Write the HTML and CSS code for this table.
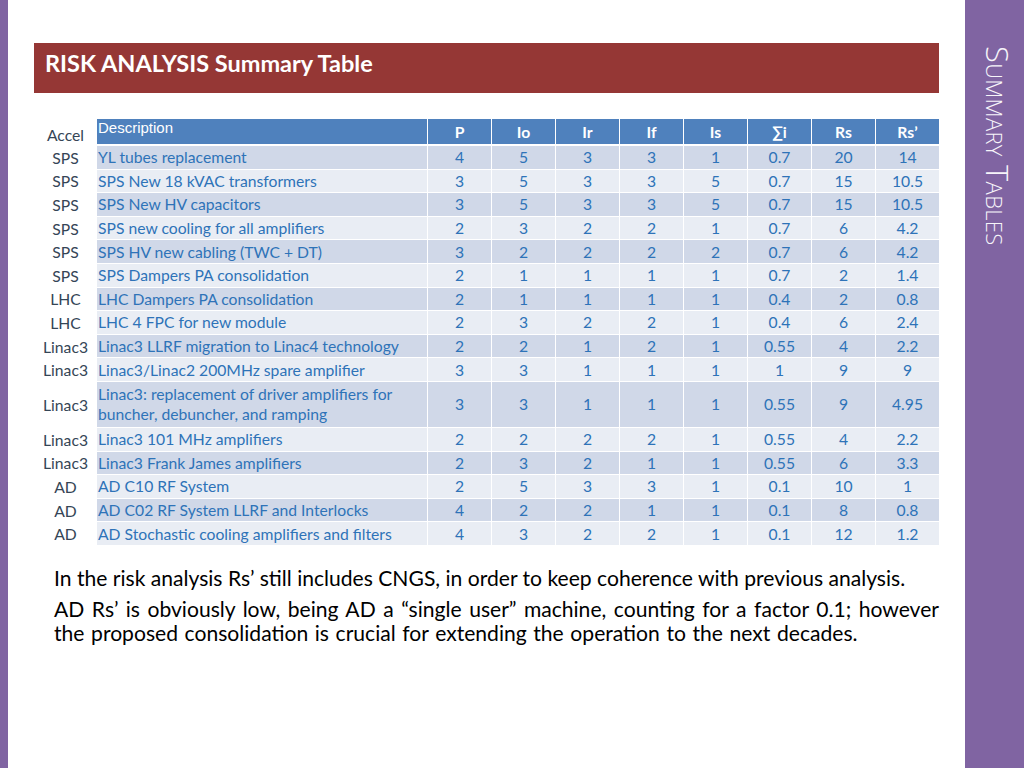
FILE: index.html
```html
<!DOCTYPE html>
<html>
<head>
<meta charset="utf-8">
<link rel="stylesheet" href="styles.css">
</head>
<body>
<div class="slide">
  <div class="left-bar"></div>
  <main class="content">
    <h1 class="title">RISK ANALYSIS Summary Table</h1>
    <table class="risk">
      <thead>
        <tr>
          <th class="accel">Accel</th>
          <th class="desc">Description</th>
          <th>P</th><th>Io</th><th>Ir</th><th>If</th><th>Is</th><th>∑i</th><th>Rs</th><th>Rs’</th>
        </tr>
      </thead>
      <tbody>
        <tr><td class="accel">SPS</td><td class="desc">YL tubes replacement</td><td>4</td><td>5</td><td>3</td><td>3</td><td>1</td><td>0.7</td><td>20</td><td>14</td></tr>
        <tr><td class="accel">SPS</td><td class="desc">SPS New 18 kVAC transformers</td><td>3</td><td>5</td><td>3</td><td>3</td><td>5</td><td>0.7</td><td>15</td><td>10.5</td></tr>
        <tr><td class="accel">SPS</td><td class="desc">SPS New HV capacitors</td><td>3</td><td>5</td><td>3</td><td>3</td><td>5</td><td>0.7</td><td>15</td><td>10.5</td></tr>
        <tr><td class="accel">SPS</td><td class="desc">SPS new cooling for all amplifiers</td><td>2</td><td>3</td><td>2</td><td>2</td><td>1</td><td>0.7</td><td>6</td><td>4.2</td></tr>
        <tr><td class="accel">SPS</td><td class="desc">SPS HV new cabling (TWC + DT)</td><td>3</td><td>2</td><td>2</td><td>2</td><td>2</td><td>0.7</td><td>6</td><td>4.2</td></tr>
        <tr><td class="accel">SPS</td><td class="desc">SPS Dampers PA consolidation</td><td>2</td><td>1</td><td>1</td><td>1</td><td>1</td><td>0.7</td><td>2</td><td>1.4</td></tr>
        <tr><td class="accel">LHC</td><td class="desc">LHC Dampers PA consolidation</td><td>2</td><td>1</td><td>1</td><td>1</td><td>1</td><td>0.4</td><td>2</td><td>0.8</td></tr>
        <tr><td class="accel">LHC</td><td class="desc">LHC 4 FPC for new module</td><td>2</td><td>3</td><td>2</td><td>2</td><td>1</td><td>0.4</td><td>6</td><td>2.4</td></tr>
        <tr><td class="accel">Linac3</td><td class="desc">Linac3 LLRF migration to Linac4 technology</td><td>2</td><td>2</td><td>1</td><td>2</td><td>1</td><td>0.55</td><td>4</td><td>2.2</td></tr>
        <tr><td class="accel">Linac3</td><td class="desc">Linac3/Linac2 200MHz spare amplifier</td><td>3</td><td>3</td><td>1</td><td>1</td><td>1</td><td>1</td><td>9</td><td>9</td></tr>
        <tr class="tall"><td class="accel">Linac3</td><td class="desc">Linac3: replacement of driver amplifiers for buncher, debuncher, and ramping</td><td>3</td><td>3</td><td>1</td><td>1</td><td>1</td><td>0.55</td><td>9</td><td>4.95</td></tr>
        <tr><td class="accel">Linac3</td><td class="desc">Linac3 101 MHz amplifiers</td><td>2</td><td>2</td><td>2</td><td>2</td><td>1</td><td>0.55</td><td>4</td><td>2.2</td></tr>
        <tr><td class="accel">Linac3</td><td class="desc">Linac3 Frank James amplifiers</td><td>2</td><td>3</td><td>2</td><td>1</td><td>1</td><td>0.55</td><td>6</td><td>3.3</td></tr>
        <tr><td class="accel">AD</td><td class="desc">AD C10 RF System</td><td>2</td><td>5</td><td>3</td><td>3</td><td>1</td><td>0.1</td><td>10</td><td>1</td></tr>
        <tr><td class="accel">AD</td><td class="desc">AD C02 RF System LLRF and Interlocks</td><td>4</td><td>2</td><td>2</td><td>1</td><td>1</td><td>0.1</td><td>8</td><td>0.8</td></tr>
        <tr><td class="accel">AD</td><td class="desc">AD Stochastic cooling amplifiers and filters</td><td>4</td><td>3</td><td>2</td><td>2</td><td>1</td><td>0.1</td><td>12</td><td>1.2</td></tr>
      </tbody>
    </table>
    <div class="notes">
      <p>In the risk analysis Rs’ still includes CNGS, in order to keep coherence with previous analysis.</p>
      <p class="just">AD Rs’ is obviously low, being AD a “single user” machine, counting for a factor 0.1; however the proposed consolidation is crucial for extending the operation to the next decades.</p>
    </div>
  </main>
  <aside class="side-bar"><span class="side-title">Summary Tables</span></aside>
</div>
</body>
</html>
```

FILE: styles.css
```css
html, body {
  margin: 0;
  padding: 0;
  background: #ffffff;
}
.slide {
  width: 1024px;
  height: 768px;
  display: flex;
  font-family: Lato, "Open Sans", sans-serif;
}
.left-bar {
  width: 8px;
  background: #8064a2;
  flex: none;
}
.content {
  flex: 1;
  padding: 43px 26px 0 26px;
}
.side-bar {
  width: 60px;
  flex: none;
  background: #8064a2;
  display: flex;
  justify-content: center;
  padding-top: 46px;
  padding-left: 5px;
  box-sizing: border-box;
}
.side-title {
  writing-mode: vertical-rl;
  font-variant: small-caps;
  font-size: 31px;
  color: #f7f5fa;
  letter-spacing: 0.3px;
  font-family: "Open Sans", Lato, sans-serif;
  font-weight: 300;
  height: max-content;
}
.title {
  margin: 0;
  height: 50px;
  background: #953735;
  color: #ffffff;
  font-size: 23.5px;
  font-weight: 700;
  line-height: 41px;
  padding-left: 11px;
  box-sizing: border-box;
}
.risk {
  margin-top: 26px;
  width: 904px;
  border-collapse: separate;
  border-spacing: 0;
  table-layout: fixed;
  font-size: 15.7px;
  color: #2e73b8;
}
.risk th, .risk td {
  padding: 0;
  text-align: center;
  border-right: 1px solid #ffffff;
  border-bottom: 1px solid #ffffff;
  height: 22.6px;
  width: 63px;
}
.risk th {
  background: #4f81bd;
  color: #ffffff;
  font-weight: 700;
  height: 23px;
  border-bottom-width: 2px;
}
.risk th.desc {
  text-align: left;
  vertical-align: top;
  font-family: "Liberation Sans", Arial, sans-serif;
  font-weight: 400;
  font-size: 15px;
  padding-left: 1px;
  line-height: 18px;
}
.risk .accel {
  width: 63px;
  background: transparent;
  color: #354556;
  font-weight: 400;
  border: none;
  vertical-align: middle;
}
.risk th.accel {
  padding-top: 4px;
}
.risk .desc {
  width: 329px;
  text-align: left;
  padding-left: 1px;
}
.risk tbody tr:nth-child(odd) td {
  background: #d0d8e8;
}
.risk tbody tr:nth-child(even) td {
  background: #e9edf4;
}
.risk tbody tr td.accel {
  background: transparent;
}
.risk tr.tall td {
  height: 45px;
  line-height: 20px;
}
.risk th:last-child, .risk td:last-child {
  border-right: none;
}
.notes {
  margin-top: 20px;
  padding-left: 20px;
  font-size: 21.1px;
  color: #000000;
  line-height: 24px;
}
.notes p {
  margin: 0 0 7px 0;
}
.notes p.just {
  text-align: justify;
  word-spacing: 1.2px;
}
```
